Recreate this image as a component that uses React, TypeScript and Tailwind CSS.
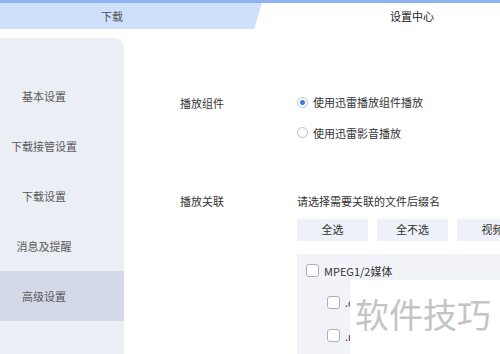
const font = { fontFamily: '"Noto Sans CJK SC", "Noto Sans", sans-serif' };

const menu = ["基本设置", "下载接管设置", "下载设置", "消息及提醒", "高级设置"];

function Radio({ checked }: { checked?: boolean }) {
  return (
    <span className="flex h-[11px] w-[11px] items-center justify-center rounded-full border border-[#b8bfcc] bg-white">
      {checked && <span className="h-[5px] w-[5px] rounded-full bg-[#3a7be0]" />}
    </span>
  );
}

function Box() {
  return <span className="block h-[13px] w-[13px] rounded-[3px] border border-[#a9b0bd] bg-white" />;
}

export default function App() {
  return (
    <div className="relative h-[354px] w-[500px] overflow-hidden bg-white text-[11px] text-[#333]" style={font}>
      <div className="h-[3px] bg-[#8db2ef]" />
      <div className="relative flex h-[26px] bg-white">
        <div className="flex w-[262px] shrink-0 items-center justify-center bg-[#cfe0fa] pr-[38px] text-[#555] [clip-path:polygon(0_0,100%_0,97%_100%,0_100%)]">
          下载
        </div>
        <div className="flex flex-1 items-center justify-center pl-[62px] text-[#222]">设置中心</div>
      </div>
      <div className="flex pt-[9px]">
        <div className="h-[330px] w-[124px] shrink-0 rounded-tr-[10px] bg-[#ebeef4] pt-[33px]">
          {menu.map((m, i) => (
            <div
              key={m}
              className={`flex h-[50px] items-center justify-center whitespace-nowrap pr-[36px] text-[#5a5a5a] ${i === 4 ? "bg-[#d3d9e7]" : ""}`}
            >
              {m}
            </div>
          ))}
        </div>
        <div className="min-w-0 flex-1 pl-[56px] pt-[56px]">
          <div className="flex">
            <div className="w-[117px] shrink-0 pt-[1px]">播放组件</div>
            <div className="flex flex-col gap-[14px]">
              <div className="flex items-center gap-[5px] whitespace-nowrap">
                <Radio checked />
                <span>使用迅雷播放组件播放</span>
              </div>
              <div className="flex items-center gap-[5px] whitespace-nowrap">
                <Radio />
                <span>使用迅雷影音播放</span>
              </div>
            </div>
          </div>
          <div className="mt-[52px] flex">
            <div className="w-[117px] shrink-0">播放关联</div>
            <div className="flex-1">
              <div className="whitespace-nowrap">请选择需要关联的文件后缀名</div>
              <div className="mt-[9px] flex gap-[9px]">
                {["全选", "全不选", "视频"].map((b) => (
                  <div key={b} className="flex h-[22px] w-[71px] shrink-0 items-center justify-center bg-[#eef1f7]">
                    {b}
                  </div>
                ))}
              </div>
              <div className="mt-[13px] h-[120px] bg-[#f1f3f8] pl-[9px] pt-[9px]">
                <div className="flex items-center gap-[5px] whitespace-nowrap">
                  <Box />
                  <span>MPEG1/2媒体</span>
                </div>
                <div className="mt-[15px] flex flex-col gap-[17px] pl-[21px]">
                  <div className="flex items-center gap-[5px]">
                    <Box />
                    <span>.dat</span>
                  </div>
                  <div className="flex items-center gap-[5px]">
                    <Box />
                    <span>.mpeg</span>
                  </div>
                </div>
              </div>
            </div>
          </div>
        </div>
      </div>
      <div className="absolute left-[350px] top-[280px] flex h-[74px] w-[150px] items-start bg-white pl-[5px] pt-[14px] text-[34px] leading-[40px] text-[#c4c4c4]">
        软件技巧
      </div>
    </div>
  );
}
